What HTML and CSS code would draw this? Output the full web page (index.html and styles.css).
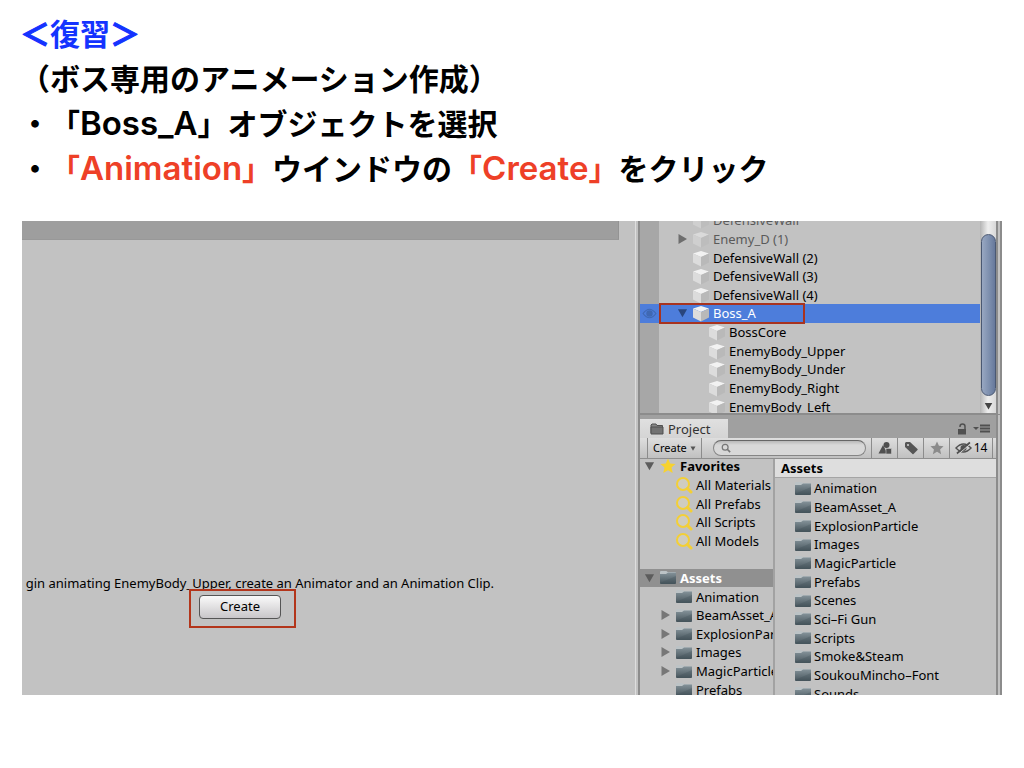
FILE: index.html
```html
<!DOCTYPE html>
<html lang="ja">
<head>
<meta charset="utf-8">
<title>復習</title>
<link rel="stylesheet" href="styles.css">
</head>
<body>
<svg class="defs" aria-hidden="true">
  <defs>
    <linearGradient id="folder-fill" x1="0" y1="0" x2="0" y2="1"><stop offset="0" stop-color="#849299"/><stop offset="1" stop-color="#46545b"/></linearGradient>
    <symbol id="cube" viewBox="0 0 18 18">
      <path d="M9 2l8 2.500L9 8 1 4.500z" fill="#f2f2f2"/>
      <path d="M1 4.500L9 8v9.500l-7-3.500q-1 0-1-1z" fill="#dcdcdc"/>
      <path d="M17 4.500L9 8v9.500l7-3.500q1 0 1-1z" fill="#b9b9b9"/>
    </symbol>
    <symbol id="folder" viewBox="0 0 18 15">
      <path d="M1 3V2q0-1 1-1h5q1 0 1.500 1H16q1 0 1 1v3H1z" fill="#bcc3c6"/>
      <path d="M1 4h6l2-1.500h8v10.500q0 1-1 1H2q-1 0-1-1V4z" fill="url(#folder-fill)"/>
      <path d="M1 13L17 6v7.500H1z" fill="#3b4a52" opacity=".25"/>
    </symbol>
    <symbol id="lens" viewBox="0 0 18 18">
      <circle cx="8" cy="8" r="6" fill="#cfccc0" stroke="#f3cf36" stroke-width="2"/>
      <path d="M12.500 12.500l3.500 3.500" stroke="#f3cf36" stroke-width="3" stroke-linecap="round"/>
    </symbol>
    <symbol id="star" viewBox="0 0 16 16"><path d="M8 .5l2.200 5 5.300.5-4 3.600 1.200 5.400L8 12.200 3.300 15l1.200-5.400-4-3.600 5.300-.5z"/></symbol>
    <symbol id="right" viewBox="0 0 10 12"><path d="M1 1l8.500 5L1 11z"/></symbol>
    <symbol id="down" viewBox="0 0 12 10"><path d="M1 1h10L6 9.500z"/></symbol>
  </defs>
</svg>
<main class="slide">
  <header class="notes">
    <h1 class="title"><span class="angle">＜</span>復習<span class="angle">＞</span></h1>
    <p>（ボス専用のアニメーション作成）</p>
    <p>・「<span class="latin">Boss_A</span>」オブジェクトを選択</p>
    <p>・<em>「<span class="latin">Animation</span>」</em>ウインドウの<em>「<span class="latin">Create</span>」</em>をクリック</p>
  </header>
  <div class="editor">
    <section class="animation">
      <div class="timeline"></div>
      <div class="prompt">
        <p>gin animating EnemyBody_Upper, create an Animator and an Animation Clip.</p>
        <div class="marked"><button class="create">Create</button></div>
      </div>
    </section>
    <div class="dock">
      <section class="hierarchy">
        <ul class="tree">
          <li class="off"><svg class="cube"><use href="#cube"/></svg>DefensiveWall</li>
          <li class="off"><svg class="arrow"><use href="#right"/></svg><svg class="cube"><use href="#cube"/></svg>Enemy_D (1)</li>
          <li><svg class="cube"><use href="#cube"/></svg>DefensiveWall (2)</li>
          <li><svg class="cube"><use href="#cube"/></svg>DefensiveWall (3)</li>
          <li><svg class="cube"><use href="#cube"/></svg>DefensiveWall (4)</li>
          <li class="selected">
            <svg class="eye" viewBox="0 0 14 10"><path d="M1 5q6-8 12 0-6 8-12 0z" fill="none" stroke="#3f68b3" stroke-width="1"/><circle cx="7" cy="5" r="3" fill="#3f68b3"/></svg>
            <svg class="arrow"><use href="#down"/></svg><svg class="cube"><use href="#cube"/></svg>Boss_A<span class="frame"></span>
          </li>
          <li class="child"><svg class="cube"><use href="#cube"/></svg>BossCore</li>
          <li class="child"><svg class="cube"><use href="#cube"/></svg>EnemyBody_Upper</li>
          <li class="child"><svg class="cube"><use href="#cube"/></svg>EnemyBody_Under</li>
          <li class="child"><svg class="cube"><use href="#cube"/></svg>EnemyBody_Right</li>
          <li class="child"><svg class="cube"><use href="#cube"/></svg>EnemyBody_Left</li>
        </ul>
        <div class="scrollbar"><div class="thumb"></div><svg class="step"><use href="#down"/></svg></div>
      </section>
      <section class="project">
        <div class="tabs">
          <div class="tab">
            <svg class="tab-icon" viewBox="0 0 14 12"><path d="M1 10V2l1-1h4l1 1.500h5.500V4" fill="#888" stroke="#505050"/><path d="M1 4h12v7H1z" fill="#737373" stroke="#505050"/></svg>Project
          </div>
          <svg class="lock" viewBox="0 0 10 12"><path d="M1 6h8v5.500H1z" fill="#505050"/><path d="M3 4V3.500q0-2.500 2.500-2.500T8 3.500V6" fill="none" stroke="#505050" stroke-width="1.500"/></svg>
          <svg class="menu" viewBox="0 0 17 9"><path d="M0 3h6L3 6z" fill="#505050"/><path d="M7 1.500h10M7 4.500h10M7 7.500h10" stroke="#505050" stroke-width="2"/></svg>
        </div>
        <div class="toolbar">
          <div class="picker">
            <select class="add" aria-label="Create"><option>Create</option></select>
            <svg class="caret"><use href="#down"/></svg>
          </div>
          <div class="search">
            <svg class="glass" viewBox="0 0 12 12"><circle cx="5" cy="5" r="3.500" fill="none" stroke="#777" stroke-width="1.500"/><path d="M7.500 7.500L11 11" stroke="#777" stroke-width="2"/></svg>
            <input class="query" type="search" aria-label="Search">
          </div>
          <button class="tool" aria-label="Filter by type"><svg viewBox="0 0 14 14"><path d="M5 4l4.500 8.500H.5z" fill="#505050"/><circle cx="8.500" cy="4" r="3" fill="#505050"/><path d="M8 7.500h5.500V13H8z" fill="#505050" stroke="#c8c8c8" stroke-width=".6"/></svg></button>
          <button class="tool" aria-label="Filter by label"><svg viewBox="0 0 14 14"><path fill-rule="evenodd" d="M1 2l1-1h4l7.500 7q.5.500 0 1L9.500 13q-.5.500-1 0L1 6zM4 3a1 1 0 1 0 .01 2A1 1 0 0 0 4 3z" fill="#555"/></svg></button>
          <button class="tool fade" aria-label="Save search"><svg><use href="#star"/></svg></button>
          <button class="tool hidden-count"><svg viewBox="0 0 17 14"><path d="M1 7q7.500-8 15 0-7.500 8-15 0z" fill="none" stroke="#505050" stroke-width="1.500"/><circle cx="8.500" cy="7" r="3" fill="#505050"/><path d="M2 12.500L15 1.500" stroke="#505050" stroke-width="2"/><path d="M3 13.500L16 2.500" stroke="#d0d0d0" stroke-width="1"/></svg>14</button>
        </div>
        <div class="browser">
          <ul class="folders">
            <li class="root"><svg class="arrow"><use href="#down"/></svg><svg class="fav"><use href="#star"/></svg>Favorites</li>
            <li><svg class="lens"><use href="#lens"/></svg>All Materials</li>
            <li><svg class="lens"><use href="#lens"/></svg>All Prefabs</li>
            <li><svg class="lens"><use href="#lens"/></svg>All Scripts</li>
            <li><svg class="lens"><use href="#lens"/></svg>All Models</li>
            <li class="spacer"></li>
            <li class="root current"><svg class="arrow"><use href="#down"/></svg><svg class="icon"><use href="#folder"/></svg>Assets</li>
            <li><svg class="icon"><use href="#folder"/></svg>Animation</li>
            <li><svg class="arrow"><use href="#right"/></svg><svg class="icon"><use href="#folder"/></svg>BeamAsset_A</li>
            <li><svg class="arrow"><use href="#right"/></svg><svg class="icon"><use href="#folder"/></svg>ExplosionParticle</li>
            <li><svg class="arrow"><use href="#right"/></svg><svg class="icon"><use href="#folder"/></svg>Images</li>
            <li><svg class="arrow"><use href="#right"/></svg><svg class="icon"><use href="#folder"/></svg>MagicParticle</li>
            <li><svg class="icon"><use href="#folder"/></svg>Prefabs</li>
          </ul>
          <div class="contents">
            <h2 class="path">Assets</h2>
            <ul class="files">
              <li><svg class="icon"><use href="#folder"/></svg>Animation</li>
              <li><svg class="icon"><use href="#folder"/></svg>BeamAsset_A</li>
              <li><svg class="icon"><use href="#folder"/></svg>ExplosionParticle</li>
              <li><svg class="icon"><use href="#folder"/></svg>Images</li>
              <li><svg class="icon"><use href="#folder"/></svg>MagicParticle</li>
              <li><svg class="icon"><use href="#folder"/></svg>Prefabs</li>
              <li><svg class="icon"><use href="#folder"/></svg>Scenes</li>
              <li><svg class="icon"><use href="#folder"/></svg>Sci–Fi Gun</li>
              <li><svg class="icon"><use href="#folder"/></svg>Scripts</li>
              <li><svg class="icon"><use href="#folder"/></svg>Smoke&amp;Steam</li>
              <li><svg class="icon"><use href="#folder"/></svg>SoukouMincho–Font</li>
              <li><svg class="icon"><use href="#folder"/></svg>Sounds</li>
            </ul>
          </div>
        </div>
      </section>
    </div>
  </div>
</main>
</body>
</html>
```
FILE: styles.css
```css
* { box-sizing: border-box; }
body { margin: 0; background: #fff; color: #000; }
ul { margin: 0; padding: 0; list-style: none; }
svg { display: block; flex: none; }
button, select, input { font: inherit; color: inherit; }
.defs { position: absolute; width: 0; height: 0; }

.slide { padding: 10px 22px 0 20px; }
.notes {
  font: 700 30px/45px "Noto Sans CJK JP", sans-serif;
  text-spacing-trim: space-all;
  white-space: nowrap;
}
.notes p, .title { margin: 0; font: inherit; }
.title { color: #1433ff; }
.angle { -webkit-text-stroke: 1px #1433ff; }
.latin { font: 600 33px/30px Inter, sans-serif; }
.notes em { font-style: normal; color: #ee4027; }

.editor {
  display: flex;
  height: 474px;
  margin: 31px 0 0 2px;
  overflow: hidden;
  background: #c2c2c2;
  font: 13px/18px "Noto Sans", "Open Sans", sans-serif;
}
.animation { flex: 1; min-width: 0; }
.timeline {
  height: 19px;
  margin-right: 16px;
  background: #9e9e9e;
  border-right: 1px solid #939393;
  border-bottom: 1px solid #989898;
}
.prompt {
  display: flex;
  flex-direction: column;
  align-items: center;
  width: 436px;
  margin-top: 334px;
}
.prompt p { align-self: flex-end; margin: 0 -36px 0 0; white-space: nowrap; }
.marked { padding: 4px 13px 7px 8px; margin-top: -3px; margin-left: 5px; border: 2px solid #b3351b; }
.create {
  display: block;
  width: 82px;
  height: 24px;
  padding: 0 0 2px;
  border: 1px solid #555;
  border-radius: 4px;
  background: linear-gradient(#fafafa, #c8c6c9);
}

.dock {
  display: flex;
  flex-direction: column;
  width: 367px;
  border-left: 1px solid #dedede;
  background: #c2c2c2;
}
.hierarchy {
  display: flex;
  height: 194px;
  margin-left: 2px;
  border: solid #8c8c8c;
  border-width: 0 1px 2px 2px;
  border-right: 6px double #8c8c8c;
  overflow: hidden;
}
.tree {
  display: grid;
  grid-auto-rows: 1fr;
  flex: 1;
  height: 205px;
  margin-top: -10px;
  background: linear-gradient(90deg, #a7a7a7 19px, #c2c2c2 19px);
}
.tree li, .folders li, .files li {
  display: flex;
  align-items: center;
  min-height: 0;
  white-space: nowrap;
}
.tree li { position: relative; padding-left: 52px; gap: 3px; }
.tree .child { padding-left: 68px; }
.cube { width: 18px; height: 18px; }
.off { color: #5a5a5a; }
.off .cube { opacity: .5; }
.arrow { width: 11px; height: 12px; fill: #6e6e6e; }
.tree .arrow { margin: 0 1px 0 -15px; }
.tree .selected { background: #4d7ddb; color: #fff; padding-left: 2px; }
.selected .eye { width: 15px; height: 11px; margin-right: 32px; }
.selected .arrow { fill: #29457d; }
.frame { position: absolute; inset: -1px auto -1px 19px; width: 146px; border: 2px solid #a8331f; }

.scrollbar {
  display: flex;
  flex-direction: column;
  align-items: center;
  width: 16px;
  padding-top: 13px;
  background: linear-gradient(90deg, #b4b4b4, #eee 50%, #d8d8d8);
}
.thumb {
  width: 15px;
  height: 162px;
  border: 1px solid #4a5872;
  border-radius: 8px;
  background: linear-gradient(90deg, #98a7c1, #7d8fae 55%, #66789b);
}
.step { width: 9px; height: 8px; margin-top: 6px; fill: #444; }

.project {
  display: flex;
  flex-direction: column;
  flex: 1;
  min-height: 0;
  margin-left: 2px;
  border: solid #8c8c8c;
  border-width: 0 1px 0 2px;
  border-right: 6px double #8c8c8c;
}
.tabs {
  display: flex;
  align-items: center;
  height: 23px;
  padding-top: 4px;
  padding-right: 6px;
  background: #a0a0a0;
}
.tab {
  display: flex;
  align-items: center;
  gap: 4px;
  width: 88px;
  height: 19px;
  padding-left: 10px;
  margin-right: auto;
  background: linear-gradient(#e0e0e0, #d4d4d4);
  color: #333;
}
.tab-icon { width: 14px; height: 12px; }
.lock { width: 10px; height: 12px; margin-right: 6px; }
.menu { width: 17px; height: 9px; }
.toolbar {
  display: flex;
  height: 21px;
  padding-left: 7px;
  border-bottom: 1px solid #8f8f8f;
  background: linear-gradient(#dedede, #c0c0c0);
  font-size: 12px;
}
.picker { display: flex; align-items: center; width: 55px; border: solid #8c8c8c; border-width: 0 1px; }
.add { width: 100%; padding: 0 0 0 5px; border: 0; background: none; font-size: 11px; appearance: none; }
.caret { width: 6px; height: 5px; margin-left: -11px; margin-right: 4px; fill: #555; pointer-events: none; }
.search {
  display: flex;
  align-items: center;
  flex: 1;
  min-width: 0;
  margin: 2px 5px 2px 11px;
  padding-left: 7px;
  border: 1px solid #858585;
  border-top-color: #666;
  border-radius: 8px;
  background: linear-gradient(#b8b8b8, #d8d8d8 4px);
}
.glass { width: 10px; height: 10px; }
.query { flex: 1; min-width: 0; height: 14px; padding: 0 4px; border: 0; background: none; outline: 0; }
.tool {
  display: flex;
  align-items: center;
  justify-content: center;
  width: 26px;
  padding: 0;
  border: 0;
  border-left: 1px solid #8c8c8c;
  background: none;
}
.tool svg { width: 14px; height: 14px; }
.fade { fill: #8b8b8b; }
.hidden-count { width: 44px; gap: 2px; margin-right: 3px; border-right: 1px solid #8c8c8c; }
.hidden-count svg { width: 17px; }

.browser { display: flex; flex: 1; min-height: 0; overflow: hidden; }
.folders {
  display: grid;
  grid-auto-rows: 1fr;
  width: 135px;
  height: 242px;
  margin-top: -2px;
  border-right: 2px solid #a2a2a2;
  overflow: hidden;
}
.folders li { padding-left: 35px; gap: 3px; overflow: hidden; }
.icon { width: 18px; height: 15px; }
.lens { width: 18px; height: 18px; }
.folders .arrow { margin: 0 1px 0 -15px; fill: #777; }
.folders .root { padding-left: 19px; font-weight: 700; }
.folders .root .arrow { fill: #5c5c5c; }
.folders .current { background: #909090; color: #fff; }
.fav { width: 16px; height: 16px; margin: 0 1px; fill: #f7d22f; }
.contents { flex: 1; min-width: 0; }
.path {
  height: 19px;
  margin: 0;
  padding-left: 6px;
  border-bottom: 1px solid #a5a5a5;
  background: #dedede;
  font: inherit;
  font-weight: 700;
}
.files { display: grid; grid-auto-rows: 1fr; height: 224px; margin-top: 1px; }
.files li { padding-left: 19px; gap: 2px; }
```
